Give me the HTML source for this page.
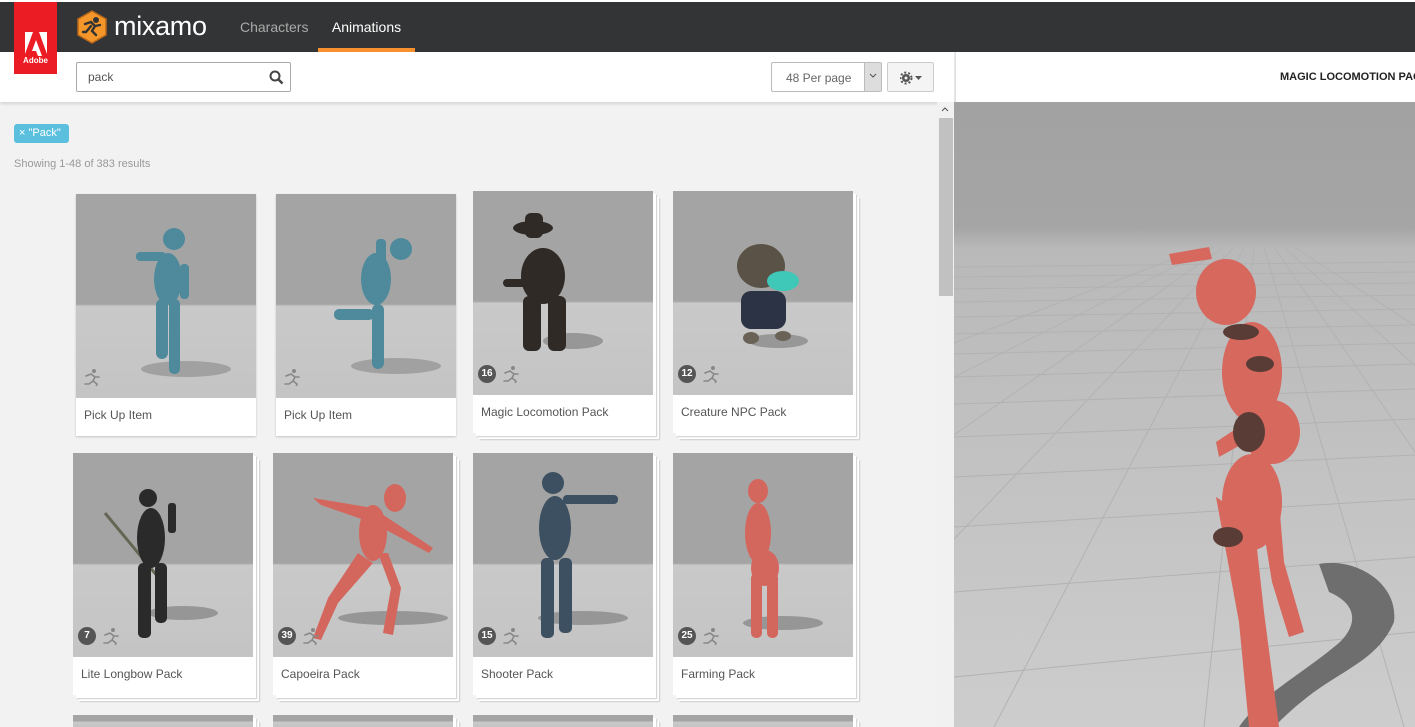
<!DOCTYPE html>
<html><head><meta charset="utf-8"><style>
*{box-sizing:border-box;margin:0;padding:0}
html,body{width:1415px;height:727px;overflow:hidden}
body{background:#f2f2f2;font-family:"Liberation Sans","DejaVu Sans",sans-serif}
#w{position:relative;width:1415px;height:727px;overflow:hidden}
.top{position:absolute;left:0;top:0;width:1415px;height:2px;background:#fff}
.hdr{position:absolute;left:0;top:2px;width:1415px;height:50px;background:#333435}
.adobe{position:absolute;left:14px;top:2px;width:43px;height:72px;background:#eb1c24;z-index:5;color:#fff;font-size:8px;font-weight:bold;text-align:center}
.tab{position:absolute;top:2px;height:50px;line-height:50px;font-size:14px}
.sub{position:absolute;left:0;top:52px;width:954px;height:50px;background:#fff;box-shadow:0 2px 3px rgba(0,0,0,.12)}
.search{position:absolute;left:76px;top:62px;width:215px;height:30px;border:1px solid #aaa;border-radius:2px;font-size:12px;color:#555;padding:7px 11px}
.sel{position:absolute;left:771px;top:62px;width:111px;height:30px;border:1px solid #bbb;border-radius:2px;font-size:12px;color:#666;padding:8px 14px;background:#fff}
.sel i{position:absolute;right:0;top:0;width:17px;height:28px;background:#ddd;border-left:1px solid #bbb}
.gear{position:absolute;left:887px;top:62px;width:47px;height:30px;border:1px solid #ccc;border-radius:2px;background:#f4f4f4}
.rhead{position:absolute;left:955px;top:52px;width:460px;height:50px;background:#fff;border-left:1px solid #e0e0e0}
.vp{position:absolute;left:954px;top:102px;width:461px;height:625px;overflow:hidden}
.scroll{position:absolute;left:937px;top:102px;width:17px;height:625px;background:#f1f1f1}
.thumb{position:absolute;left:939px;top:118px;width:14px;height:178px;background:#c1c1c1}
.tag{position:absolute;left:14px;top:124px;width:55px;height:19px;background:#5bc0de;border-radius:3px;color:#fff;font-size:11px;padding:3px 5px;white-space:nowrap}
.res{position:absolute;left:14px;top:158px;font-size:11px;color:#999}
.card{position:absolute;width:180px;height:242px;background:#fff;box-shadow:0 1px 2px rgba(0,0,0,.2)}
.pk{box-shadow:3px 3px 0 #fff,4px 4px 1px #ccc,6px 6px 0 #fff,7px 7px 1px #ccc}
.img{position:absolute;left:0;top:0;width:180px;height:204px;background:linear-gradient(#a4a4a4 0,#a4a4a4 54%,#c9c9c9 55%,#c4c4c4 100%);overflow:hidden}
.cap{position:absolute;left:8px;top:214px;font-size:12px;color:#555}
.n{position:absolute;left:5px;top:174px;width:18px;height:18px;border-radius:9px;background:#555;color:#fff;font-size:10px;text-align:center;line-height:18px;font-weight:bold}
.run{position:absolute;top:174px;width:18px;height:18px}
</style></head><body><div id="w">
<svg width="0" height="0" style="position:absolute"><defs><g id="r"><circle cx="12" cy="3" r="2" fill="#888"/><path d="M4 8l5-2 4 3-2 4 4 3-1 3M11 13l-4 3-4 0M13 9l4 0" stroke="#888" stroke-width="1.6" fill="none" stroke-linecap="round"/></g></defs></svg>
<div class="top"></div>
<div class="hdr"></div>
<div class="adobe"><svg width="22" height="24" viewBox="0 0 22 24" style="margin-top:30px"><path d="M0 0h8L0 22z M14 0h8v22z M11 8l6 16h-4l-2-5h-4z" fill="#fff"/></svg><div style="margin-top:-2px">Adobe</div></div>
<svg style="position:absolute;left:76px;top:10px" width="32" height="34" viewBox="0 0 32 34"><polygon points="16,1 30,9 30,25 16,33 2,25 2,9" fill="#f4962a" stroke="#b8681a" stroke-width="1.5"/><circle cx="20" cy="10" r="3" fill="#333"/><path d="M9 14l6-2 4 4-3 5 4 4M15 16l-5 6-3 0M19 16l5-1" stroke="#333" stroke-width="2.4" fill="none" stroke-linecap="round"/></svg>
<div style="position:absolute;left:114px;top:11px;font-size:27px;line-height:30px;color:#fff;letter-spacing:-0.3px">mixamo</div>
<div class="tab" style="left:240px;color:#aaa">Characters</div>
<div class="tab" style="left:318px;width:97px;text-align:center;color:#fff;border-bottom:4px solid #f7902d">Animations</div>
<div class="sub"></div>
<div class="search">pack<svg style="position:absolute;right:6px;top:7px" width="15" height="15" viewBox="0 0 15 15"><circle cx="6" cy="6" r="4.5" fill="none" stroke="#444" stroke-width="2"/><path d="M9.5 9.5l4 4" stroke="#444" stroke-width="2.5"/></svg></div>
<div class="sel">48 Per page<i><svg style="position:absolute;left:4px;top:10px" width="8" height="6"><path d="M1 1l3 3 3-3" stroke="#555" fill="none"/></svg></i></div>
<div class="gear"><svg style="position:absolute;left:12px;top:8px" width="24" height="14" viewBox="0 0 24 14"><circle cx="6" cy="7" r="4" fill="#555"/><circle cx="6" cy="7" r="5.5" fill="none" stroke="#555" stroke-width="2" stroke-dasharray="2 2"/><circle cx="6" cy="7" r="1.5" fill="#f4f4f4"/><path d="M15 5h7l-3.5 4z" fill="#555"/></svg></div>
<div class="rhead"><div style="position:absolute;left:324px;top:19px;font-size:11px;font-weight:bold;color:#222;white-space:nowrap">MAGIC LOCOMOTION PACK</div></div>
<div class="tag">× "Pack"</div>
<div class="res">Showing 1-48 of 383 results</div>

<div class="card" style="left:76px;top:194px"><div class="img"><svg width="180" height="204"><ellipse cx="110" cy="175" rx="45" ry="8" fill="#888" opacity=".6"/><g fill="#4e8a9c"><circle cx="98" cy="45" r="11"/><ellipse cx="92" cy="85" rx="14" ry="26"/><rect x="80" y="105" width="12" height="60" rx="6"/><rect x="93" y="105" width="11" height="75" rx="5"/><rect x="60" y="58" width="30" height="9" rx="4"/><rect x="104" y="70" width="9" height="35" rx="4"/></g></svg></div><svg class="run" style="left:6px"><use href="#r"/></svg><div class="cap">Pick Up Item</div></div>
<div class="card" style="left:276px;top:194px"><div class="img"><svg width="180" height="204"><ellipse cx="120" cy="172" rx="45" ry="8" fill="#888" opacity=".6"/><g fill="#4e8a9c"><circle cx="125" cy="55" r="11"/><ellipse cx="100" cy="85" rx="15" ry="26"/><rect x="58" y="115" width="40" height="11" rx="5"/><rect x="96" y="110" width="12" height="65" rx="6"/><rect x="100" y="45" width="10" height="30" rx="4"/></g></svg></div><svg class="run" style="left:6px"><use href="#r"/></svg><div class="cap">Pick Up Item</div></div>
<div class="card pk" style="left:473px;top:191px"><div class="img"><svg width="180" height="204"><ellipse cx="100" cy="150" rx="30" ry="8" fill="#777" opacity=".6"/><g fill="#2f2a26"><ellipse cx="60" cy="37" rx="20" ry="7"/><rect x="52" y="22" width="18" height="25" rx="6"/><ellipse cx="70" cy="85" rx="22" ry="28"/><rect x="30" y="88" width="40" height="8" rx="4"/><rect x="50" y="105" width="18" height="55" rx="6"/><rect x="75" y="105" width="18" height="55" rx="6"/></g></svg></div><div class="n">16</div><svg class="run" style="left:28px"><use href="#r"/></svg><div class="cap">Magic Locomotion Pack</div></div>
<div class="card pk" style="left:673px;top:191px"><div class="img"><svg width="180" height="204"><ellipse cx="105" cy="150" rx="30" ry="7" fill="#777" opacity=".6"/><ellipse cx="88" cy="75" rx="24" ry="22" fill="#5a5246"/><ellipse cx="110" cy="90" rx="16" ry="10" fill="#3fc8b8"/><rect x="68" y="100" width="45" height="38" rx="10" fill="#2c3344"/><ellipse cx="78" cy="147" rx="8" ry="6" fill="#6a6256"/><ellipse cx="110" cy="145" rx="8" ry="5" fill="#6a6256"/></svg></div><div class="n">12</div><svg class="run" style="left:28px"><use href="#r"/></svg><div class="cap">Creature NPC Pack</div></div>

<div class="card pk" style="left:73px;top:453px"><div class="img"><svg width="180" height="204"><ellipse cx="110" cy="160" rx="35" ry="7" fill="#777" opacity=".6"/><path d="M32 60L90 130" stroke="#665" stroke-width="3"/><g fill="#2a2a2a"><circle cx="75" cy="45" r="9"/><ellipse cx="78" cy="85" rx="14" ry="30"/><rect x="65" y="110" width="13" height="75" rx="5"/><rect x="82" y="110" width="12" height="60" rx="5"/><rect x="95" y="50" width="8" height="30" rx="3"/></g></svg></div><div class="n">7</div><svg class="run" style="left:28px"><use href="#r"/></svg><div class="cap">Lite Longbow Pack</div></div>
<div class="card pk" style="left:273px;top:453px"><div class="img"><svg width="180" height="204"><ellipse cx="120" cy="165" rx="55" ry="7" fill="#777" opacity=".6"/><g fill="#d4675d"><ellipse cx="122" cy="45" rx="11" ry="14"/><path d="M40 45L100 55 160 95 156 100 100 70 48 52z"/><ellipse cx="100" cy="80" rx="14" ry="28"/><path d="M85 100L55 145 40 185 48 187 65 150 100 110z"/><path d="M105 100L118 135 110 180 120 182 128 135 115 100z"/></g></svg></div><div class="n">39</div><svg class="run" style="left:28px"><use href="#r"/></svg><div class="cap">Capoeira Pack</div></div>
<div class="card pk" style="left:473px;top:453px"><div class="img"><svg width="180" height="204"><ellipse cx="110" cy="165" rx="45" ry="7" fill="#777" opacity=".6"/><g fill="#3c5061"><circle cx="80" cy="30" r="11"/><ellipse cx="82" cy="75" rx="16" ry="32"/><rect x="90" y="42" width="55" height="9" rx="4"/><rect x="68" y="105" width="13" height="80" rx="5"/><rect x="86" y="105" width="13" height="75" rx="5"/></g></svg></div><div class="n">15</div><svg class="run" style="left:28px"><use href="#r"/></svg><div class="cap">Shooter Pack</div></div>
<div class="card pk" style="left:673px;top:453px"><div class="img"><svg width="180" height="204"><ellipse cx="110" cy="170" rx="40" ry="7" fill="#777" opacity=".6"/><g fill="#d4675d"><ellipse cx="85" cy="38" rx="10" ry="12"/><ellipse cx="85" cy="80" rx="13" ry="30"/><ellipse cx="92" cy="115" rx="14" ry="18"/><rect x="78" y="120" width="11" height="65" rx="5"/><rect x="94" y="120" width="11" height="65" rx="5"/></g></svg></div><div class="n">25</div><svg class="run" style="left:28px"><use href="#r"/></svg><div class="cap">Farming Pack</div></div>

<div class="card pk" style="left:73px;top:715px;height:12px"><div class="img" style="height:12px"></div></div>
<div class="card pk" style="left:273px;top:715px;height:12px"><div class="img" style="height:12px"></div></div>
<div class="card pk" style="left:473px;top:715px;height:12px"><div class="img" style="height:12px"></div></div>
<div class="card pk" style="left:673px;top:715px;height:12px"><div class="img" style="height:12px"></div></div>

<div class="scroll"></div><div class="thumb"></div>
<svg style="position:absolute;left:941px;top:106px" width="8" height="6"><path d="M1 5l3-3 3 3" stroke="#555" fill="none"/></svg>

<div class="vp"><svg width="461" height="625">
<defs><linearGradient id="g" x1="0" y1="0" x2="0" y2="1"><stop offset="0" stop-color="#a2a2a2"/><stop offset=".2" stop-color="#a5a5a5"/><stop offset=".235" stop-color="#b9b9b9"/><stop offset="1" stop-color="#cdcdcd"/></linearGradient></defs>
<rect width="461" height="625" fill="url(#g)"/>
<g stroke="#b2b2b2" stroke-width="1" fill="none">
<path d="M0 165L461 160M0 175L461 170M0 187L461 181M0 200L461 193M0 215L461 207M0 232L461 223M0 252L461 241M0 275L461 262M0 302L461 287M0 335L461 317M0 375L461 353M0 425L461 397M0 490L461 455M0 575L461 530"/>
<path d="M260 145L-700 625M270 145L-420 625M280 145L-180 625M290 145L40 625M300 145L250 625M310 145L450 625M320 145L650 625M330 145L860 625M340 145L1080 625M250 145L-1000 625"/>
</g>
<path d="M365 462C400 455 445 480 440 520 425 555 395 565 360 590 340 605 330 615 320 625L285 625C305 595 350 570 380 545 400 530 410 505 375 490z" fill="#6e6e6e"/>
<g fill="#d6685e">
<ellipse cx="272" cy="190" rx="30" ry="33"/>
<path d="M215 152L255 145 258 157 218 163z"/>
<ellipse cx="298" cy="270" rx="30" ry="50"/>
<ellipse cx="318" cy="330" rx="28" ry="32"/>
<path d="M300 315L262 340 265 355 310 330z"/>
<ellipse cx="298" cy="400" rx="30" ry="48"/>
<path d="M262 395L285 520 295 625 325 625 310 510 300 420z"/>
<path d="M305 400L318 480 335 535 350 530 330 460 325 400z"/>
</g>
<g fill="#5a3c36"><ellipse cx="287" cy="230" rx="18" ry="8"/><ellipse cx="306" cy="262" rx="14" ry="8"/><ellipse cx="295" cy="330" rx="16" ry="20"/><ellipse cx="274" cy="435" rx="15" ry="10"/></g>
</svg></div>
</div></body></html>
